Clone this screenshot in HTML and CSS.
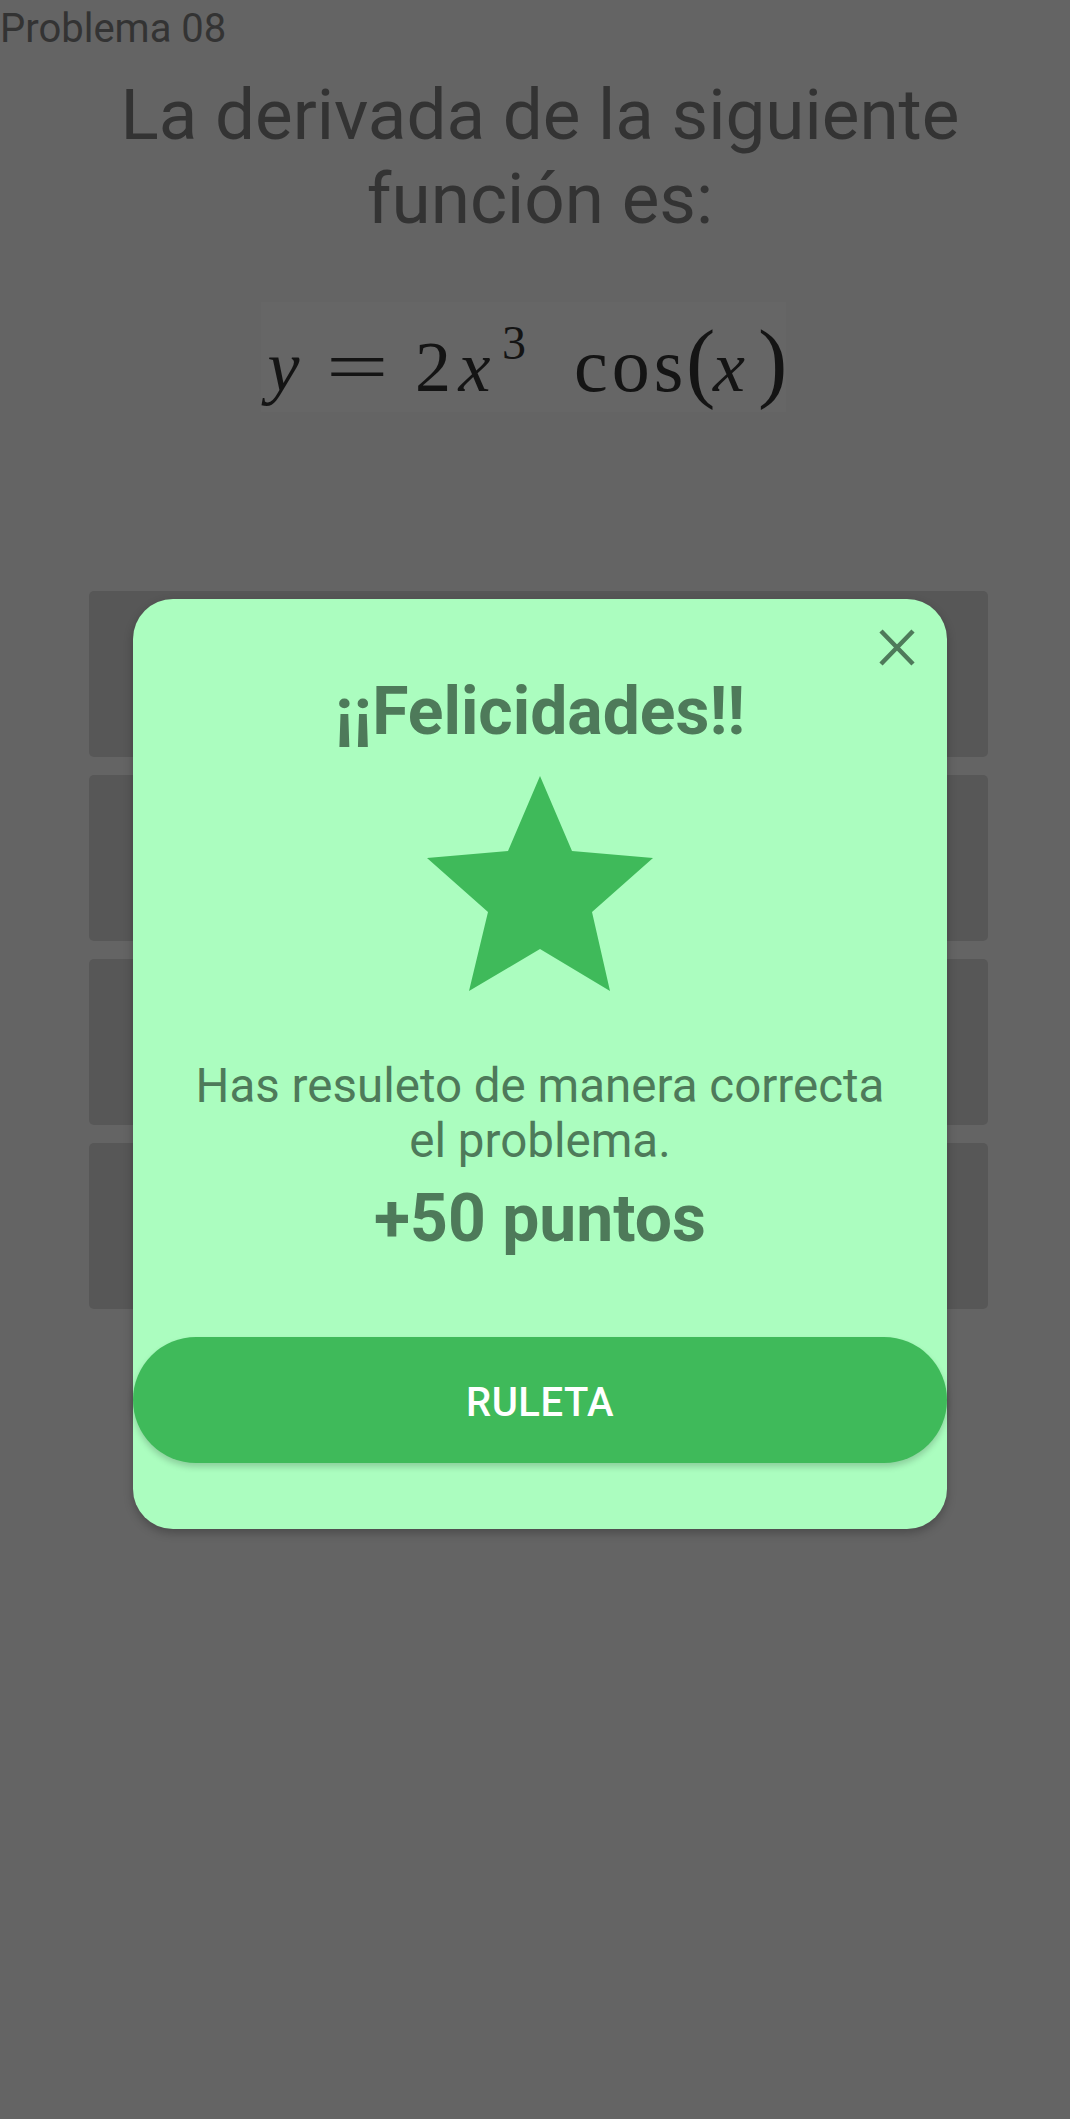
FILE: index.html
```html
<!DOCTYPE html>
<html lang="es">
<head>
<meta charset="utf-8">
<title>Problema 08</title>
<link rel="stylesheet" href="styles.css">
</head>
<body>
<main class="page">
  <div class="label">Problema 08</div>
  <h1 class="title">La derivada de la siguiente función es:</h1>
  <div class="eq-wrap">
    <div class="eq">
      <span class="t t-y mi">y</span><span class="t t-eq mo"><span class="eqsign">=</span></span><span class="t t-2">2</span><span class="t t-x1 mi">x</span><span class="t t-3 sup">3</span><span class="t t-cos">cos</span><span class="t t-lp paren">(</span><span class="t t-x2 mi">x</span><span class="t t-rp paren">)</span>
    </div>
  </div>
  <div class="options">
    <div class="option"></div>
    <div class="option"></div>
    <div class="option"></div>
    <div class="option"></div>
  </div>
</main>

<div class="modal">
  <button class="close" aria-label="Cerrar">
    <svg width="36" height="37" viewBox="0 0 36 37"><path d="M2 2 L34 35 M34 2 L2 35" stroke="#4e7a5a" stroke-width="4.5" fill="none"/></svg>
  </button>
  <h2 class="modal-title">¡¡Felicidades!!</h2>
  <svg class="star" width="226" height="215" viewBox="0 0 226 215">
    <polygon points="113,0 145,75 226,82 165,136 183,215 113,173 42,215 61,136 0,82 81,75" fill="#3fba5a"/>
  </svg>
  <p class="msg">Has resuleto de manera correcta el problema.</p>
  <p class="points">+50 puntos</p>
  <button class="cta">RULETA</button>
</div>
</body>
</html>
```
FILE: styles.css
```css
* { box-sizing: border-box; }

html, body {
  margin: 0;
  padding: 0;
}

body {
  width: 1070px;
  height: 2119px;
  background: #646464;
  font-family: Roboto, "Liberation Sans", sans-serif;
  color: #333333;
  position: relative;
  overflow: hidden;
}

.page {
  display: flex;
  flex-direction: column;
}

.label {
  font-size: 40px;
  line-height: 47px;
  padding-top: 5px;
  color: #333333;
}

.title {
  margin: 21px 0 0 10px;
  width: 1060px;
  font-size: 71px;
  font-weight: 400;
  line-height: 84px;
  text-align: center;
  color: #333333;
}

.eq-wrap {
  margin-top: 61px;
  margin-left: 261px;
  width: 525px;
  height: 110px;
  background: #666666;
}

.eq {
  font-family: "Liberation Serif", "Times New Roman", serif;
  font-size: 72px;
  line-height: 72px;
  color: #141414;
  white-space: nowrap;
  padding-top: 27px;
  padding-left: 2px;
}

.t {
  display: inline-block;
  text-align: center;
}

.mi { font-style: italic; }

.t-y { width: 41px; }
.t-eq { width: 57px; margin-left: 25px; }
.eqsign { display: inline-block; transform: scaleX(1.55); }
.t-2 { width: 36px; margin-left: 29px; }
.t-x1 { width: 45px; margin-left: 1px; }
.t-3 { width: 24px; margin-left: 5px; font-size: 48px; line-height: 0; vertical-align: 32px; }
.t-cos { width: 113px; margin-left: 44px; letter-spacing: 4px; text-indent: 4px; font-size: 76px; }
.t-lp { width: 18px; margin-left: 3px; }
.t-x2 { width: 50px; }
.t-rp { width: 21px; margin-left: 4px; }
.paren { font-size: 88px; line-height: 0; font-weight: 400; }

.options {
  margin-top: 179px;
  margin-left: 89px;
  width: 899px;
  display: flex;
  flex-direction: column;
  gap: 18px;
}

.option {
  height: 166px;
  background: #575757;
  border-radius: 5px;
}

.modal {
  position: absolute;
  left: 133px;
  top: 599px;
  width: 814px;
  height: 930px;
  background: #abfdbf;
  border-radius: 40px;
  box-shadow: 0 4px 10px rgba(0, 0, 0, 0.25);
  display: flex;
  flex-direction: column;
  align-items: center;
  padding-top: 74px;
  color: #4e7a5a;
}

.close {
  position: absolute;
  right: 32px;
  top: 30px;
  width: 36px;
  height: 37px;
  padding: 0;
  border: 0;
  background: none;
  display: block;
}

.close svg { display: block; }

.modal-title {
  margin: 0;
  font-size: 66px;
  line-height: 77px;
  font-weight: 700;
}

.star {
  margin-top: 26px;
  display: block;
}

.msg {
  margin: 68px 0 0;
  max-width: 716px;
  font-size: 47.5px;
  line-height: 55px;
  text-align: center;
}

.points {
  margin: 11px 0 0;
  font-size: 66px;
  line-height: 77px;
  font-weight: 700;
}

.cta {
  margin-top: 80px;
  width: 814px;
  height: 126px;
  padding-top: 5px;
  border: 0;
  border-radius: 63px;
  background: #3fba5a;
  color: #ffffff;
  font-family: Roboto, "Liberation Sans", sans-serif;
  font-size: 40px;
  font-weight: 500;
  letter-spacing: 0.5px;
  box-shadow: 0 4px 6px rgba(0, 0, 0, 0.18);
}
```
